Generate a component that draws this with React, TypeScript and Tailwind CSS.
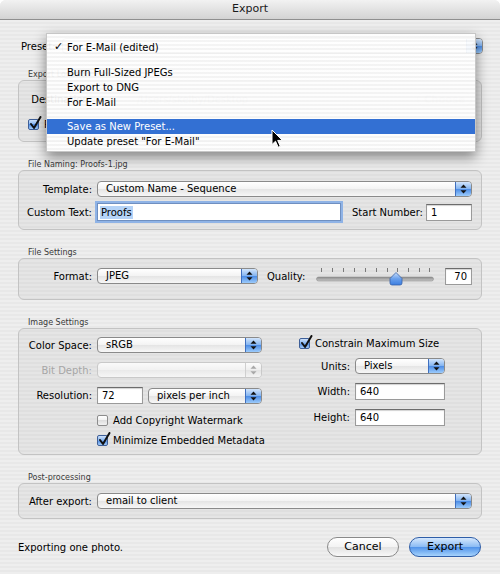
import React from "react";

const stripes =
  "bg-[repeating-linear-gradient(180deg,#eeeeee_0px,#eeeeee_2px,#e8e8e8_2px,#e8e8e8_4px)]";

function Arrows({ disabled = false }: { disabled?: boolean }) {
  const fill = disabled ? "#a8a8a8" : "#111111";
  return (
    <svg width="7" height="10" viewBox="0 0 7 10">
      <path d="M3.5 0.5 L6.5 3.8 L0.5 3.8 Z" fill={fill} />
      <path d="M0.5 6.2 L6.5 6.2 L3.5 9.5 Z" fill={fill} />
    </svg>
  );
}

interface PopupProps {
  value?: string;
  className?: string;
  disabled?: boolean;
}

function Popup({ value = "", className = "", disabled = false }: PopupProps) {
  return (
    <div
      className={`flex h-[16px] items-stretch overflow-hidden rounded-[4px] border ${
        disabled
          ? "border-[#c9c9c9] bg-[linear-gradient(180deg,#fafafa,#f1f1f1_50%,#e9e9e9_50%,#f6f6f6)]"
          : "border-[#8a8a8a] bg-[linear-gradient(180deg,#ffffff,#f3f3f3_50%,#e4e4e4_50%,#f7f7f7)]"
      } ${className}`}
    >
      <span className="flex-1 truncate pl-[8px] text-[10px] leading-[14px]">{value}</span>
      <span
        className={`flex w-[16px] items-center justify-center border-l ${
          disabled
            ? "border-[#cfcfcf] bg-[linear-gradient(180deg,#fbfbfb,#eeeeee_50%,#e2e2e2_50%,#f4f4f4)]"
            : "border-[#3f6fbf] bg-[linear-gradient(180deg,#d2e5fc,#85b5f1_48%,#4d8de6_52%,#9ccbfb)]"
        }`}
      >
        <Arrows disabled={disabled} />
      </span>
    </div>
  );
}

function Field({ value, className = "", align = "left" }: { value: string; className?: string; align?: "left" | "right" }) {
  return (
    <div
      className={`flex h-[17px] items-center border border-[#9a9a9a] border-t-[#6c6c6c] bg-white px-[4px] text-[10px] shadow-[inset_0_1px_1px_rgba(0,0,0,0.18)] ${
        align === "right" ? "justify-end" : ""
      } ${className}`}
    >
      {value}
    </div>
  );
}

function Checkbox({ checked = false }: { checked?: boolean }) {
  return (
    <span
      className={`relative inline-block h-[11px] w-[11px] shrink-0 rounded-[2px] border ${
        checked
          ? "border-[#3e5f98] bg-[linear-gradient(180deg,#cfe2fa,#7fb0f0_50%,#4f8ce4_50%,#a3cbf7)]"
          : "border-[#8c8c8c] bg-[linear-gradient(180deg,#ffffff,#f0f0f0_50%,#dedede_50%,#f2f2f2)]"
      }`}
    >
      {checked && (
        <svg className="absolute -top-[4px] left-[0px]" width="13" height="14" viewBox="0 0 13 14">
          <path d="M2 8 L5 12 L11.5 1" fill="none" stroke="#111" strokeWidth="2" strokeLinecap="round" strokeLinejoin="round" />
        </svg>
      )}
    </span>
  );
}

function Group({ title, className = "", boxClass = "", children }: { title: string; className?: string; boxClass?: string; children?: React.ReactNode }) {
  return (
    <div className={className}>
      <div className="h-[10px] pl-[10px] text-[8px] leading-[10px] text-[#3a3a3a]">{title}</div>
      <div className={`rounded-[6px] border border-[#c3c3c3] bg-black/[0.035] ${boxClass}`}>{children}</div>
    </div>
  );
}

function Label({ text, className = "w-[73px]", muted = false }: { text: string; className?: string; muted?: boolean }) {
  return (
    <span className={`shrink-0 whitespace-nowrap text-right text-[10px] ${muted ? "text-[#a6a6a6]" : ""} ${className}`}>{text}</span>
  );
}

function Slider() {
  const ticks = [5, 16, 27, 38, 49, 60, 71, 81, 92, 103, 113];
  return (
    <svg width="120" height="20" viewBox="0 0 120 20" className="shrink-0 self-start overflow-visible">
      <defs>
        <linearGradient id="track" x1="0" y1="0" x2="0" y2="1">
          <stop offset="0" stopColor="#8a8a8a" />
          <stop offset="1" stopColor="#c9c9c9" />
        </linearGradient>
        <linearGradient id="thumb" x1="0" y1="0" x2="0" y2="1">
          <stop offset="0" stopColor="#c8defb" />
          <stop offset="0.5" stopColor="#6aa0ec" />
          <stop offset="1" stopColor="#3b7ee0" />
        </linearGradient>
      </defs>
      {ticks.map((x) => (
        <line key={x} x1={x + 0.5} y1="2" x2={x + 0.5} y2="6" stroke="#7a7a7a" strokeWidth="1" />
      ))}
      <rect x="0.5" y="11" width="117" height="4" rx="2" fill="url(#track)" stroke="#8e8e8e" strokeWidth="0.6" />
      <path d="M80 6.5 L86 12.5 L86 17 Q86 19 84 19 L76 19 Q74 19 74 17 L74 12.5 Z" fill="url(#thumb)" stroke="#355fa8" strokeWidth="0.8" />
    </svg>
  );
}

function PillButton({ text, primary = false }: { text: string; primary?: boolean }) {
  return (
    <div
      className={`flex h-[20px] w-[72px] items-center justify-center rounded-full border text-[11px] ${
        primary
          ? "border-[#2f5ea8] bg-[linear-gradient(180deg,#d6e8fd,#8cbcf4_48%,#5294ea_52%,#a6d3fc)]"
          : "border-[#8a8a8a] bg-[linear-gradient(180deg,#ffffff,#f3f3f3_48%,#e2e2e2_52%,#f8f8f8)]"
      }`}
    >
      {text}
    </div>
  );
}

function PresetMenu() {
  const item = "flex h-[15px] items-center pl-[7px] text-[10px] whitespace-nowrap";
  return (
    <div className="absolute left-[46px] top-[33px] flex h-[119px] w-[430px] flex-col border border-[#c6c6c6] bg-[repeating-linear-gradient(180deg,rgba(255,255,255,0.94)_0px,rgba(255,255,255,0.94)_2px,rgba(244,244,244,0.94)_2px,rgba(244,244,244,0.94)_4px)] pt-[6px] pb-[3px] shadow-[0_5px_12px_rgba(0,0,0,0.45)]">
      <div className={item}>
        <span className="w-[13px] text-[11px] font-bold">✓</span>For E-Mail (edited)
      </div>
      <div className="mt-[4px] mb-[6px] h-px bg-[#d6d6d6]" />
      <div className={item}>
        <span className="w-[13px]" />Burn Full-Sized JPEGs
      </div>
      <div className={item}>
        <span className="w-[13px]" />Export to DNG
      </div>
      <div className={item}>
        <span className="w-[13px]" />For E-Mail
      </div>
      <div className="mt-[3px] mb-[6px] h-px bg-[#d6d6d6]" />
      <div className={`${item} h-[14px] bg-[#3370d3] text-white`}>
        <span className="w-[13px]" />Save as New Preset...
      </div>
      <div className={item}>
        <span className="w-[13px]" />Update preset "For E-Mail"
      </div>
    </div>
  );
}

function Cursor() {
  return (
    <svg className="absolute left-[271px] top-[129px]" width="13" height="20" viewBox="0 0 13 20">
      <path d="M1 1 L1 15.5 L4.5 12.2 L7.2 18.2 L9.3 17.3 L6.7 11.4 L11.4 11.4 Z" fill="#000" stroke="#fff" strokeWidth="1" strokeLinejoin="round" />
    </svg>
  );
}

export default function App() {
  return (
    <div className="relative h-[574px] w-[500px] overflow-hidden bg-white font-['DejaVu_Sans',sans-serif] text-[10px] text-black">
      <div className={`flex h-full flex-col overflow-hidden rounded-t-[6px] ${stripes}`}>
        {/* Title bar */}
        <div className="flex h-[20px] shrink-0 items-center justify-center border-b border-[#8f8f8f] bg-[linear-gradient(180deg,#f2f2f2,#d3d3d3)] text-[11px] text-[#1a1a1a]">
          Export
        </div>

        <div className="flex flex-col px-[18px]">
          {/* Preset row, value hidden under the open menu */}
          <div className="mt-[18px] flex h-[16px] items-center">
            <span className="pl-[3px] text-[10px]">Preset:</span>
            <Popup className="ml-[6px] mr-[-1px] flex-1" />
          </div>

          {/* Export location */}
          <Group title="Export Location" className="mt-[16px]" boxClass="h-[62px]">
            <div className="mt-[11px] flex h-[15px] items-center">
              <Label text="Destination:" />
              <span className="ml-[45px] flex-1 text-[10px] text-[#b0b0b0]">/Users/skelby/Desktop</span>
              <div className="mr-[9px] flex h-[15px] w-[55px] items-center justify-center rounded-full border border-[#d0d0d0] text-[10px] font-bold text-[#c4c4c4]">
                Choose
              </div>
            </div>
            <div className="mt-[10px] flex items-center pl-[9px]">
              <Checkbox checked />
              <span className="ml-[5px] text-[10px]">Put in Subfolder:</span>
            </div>
          </Group>

          {/* File naming */}
          <Group title="File Naming:  Proofs-1.jpg" className="mt-[18px]" boxClass="h-[60px] pt-[10px] pr-[9px]">
            <div className="flex h-[16px] items-center">
              <Label text="Template:" />
              <Popup value="Custom Name - Sequence" className="ml-[5px] flex-1" />
            </div>
            <div className="mt-[6px] flex h-[18px] items-center">
              <Label text="Custom Text:" />
              <div className="ml-[5px] flex h-[18px] w-[244px] items-center border border-[#6f8fc0] bg-white px-[2px] shadow-[0_0_0_2px_#8fb3e6]">
                <span className="bg-[#b5d3f7] px-[1px] text-[10px] leading-[13px]">Proofs</span>
              </div>
              <span className="ml-[11px] text-[10px]">Start Number:</span>
              <Field value="1" className="ml-auto w-[46px]" />
            </div>
          </Group>

          {/* File settings */}
          <Group title="File Settings" className="mt-[18px]" boxClass="h-[42px] pt-[9px] pr-[9px]">
            <div className="flex h-[16px] items-center">
              <Label text="Format:" />
              <Popup value="JPEG" className="ml-[5px] w-[161px]" />
              <span className="ml-[9px] text-[10px]">Quality:</span>
              <div className="ml-[11px] flex">
                <Slider />
              </div>
              <Field value="70" align="right" className="ml-auto w-[27px]" />
            </div>
          </Group>

          {/* Image settings */}
          <Group title="Image Settings" className="mt-[18px]" boxClass="h-[127px] flex">
            <div className="flex w-[243px] shrink-0 flex-col pt-[8px]">
              <div className="flex h-[16px] items-center">
                <Label text="Color Space:" />
                <Popup value="sRGB" className="ml-[5px] w-[165px]" />
              </div>
              <div className="mt-[9px] flex h-[16px] items-center">
                <Label text="Bit Depth:" muted />
                <Popup disabled className="ml-[5px] w-[165px]" />
              </div>
              <div className="mt-[9px] flex h-[17px] items-center">
                <Label text="Resolution:" />
                <Field value="72" className="ml-[5px] w-[46px]" />
                <Popup value="pixels per inch" className="ml-[5px] w-[114px]" />
              </div>
              <div className="mt-[10px] flex h-[12px] items-center pl-[78px]">
                <Checkbox />
                <span className="ml-[5px] whitespace-nowrap text-[10px]">Add Copyright Watermark</span>
              </div>
              <div className="mt-[8px] flex h-[12px] items-center pl-[78px]">
                <Checkbox checked />
                <span className="ml-[5px] whitespace-nowrap text-[10px]">Minimize Embedded Metadata</span>
              </div>
            </div>
            <div className="flex flex-col pt-[8px]">
              <div className="flex h-[12px] items-center pl-[37px]">
                <Checkbox checked />
                <span className="ml-[5px] whitespace-nowrap text-[10px]">Constrain Maximum Size</span>
              </div>
              <div className="mt-[9px] flex h-[16px] items-center">
                <Label text="Units:" className="w-[88px]" />
                <Popup value="Pixels" className="ml-[5px] w-[90px]" />
              </div>
              <div className="mt-[9px] flex h-[17px] items-center">
                <Label text="Width:" className="w-[88px]" />
                <Field value="640" className="ml-[5px] w-[90px]" />
              </div>
              <div className="mt-[9px] flex h-[17px] items-center">
                <Label text="Height:" className="w-[88px]" />
                <Field value="640" className="ml-[5px] w-[90px]" />
              </div>
            </div>
          </Group>

          {/* Post-processing */}
          <Group title="Post-processing" className="mt-[18px]" boxClass="h-[36px] pt-[9px] pr-[9px]">
            <div className="flex h-[16px] items-center">
              <Label text="After export:" />
              <Popup value="email to client" className="ml-[5px] flex-1" />
            </div>
          </Group>

          {/* Footer */}
          <div className="mt-[18px] flex h-[20px] items-center">
            <span className="flex-1 text-[10px]">Exporting one photo.</span>
            <PillButton text="Cancel" />
            <div className="ml-[10px] mr-[1px]">
              <PillButton text="Export" primary />
            </div>
          </div>
        </div>
      </div>

      <PresetMenu />
      <Cursor />
    </div>
  );
}
